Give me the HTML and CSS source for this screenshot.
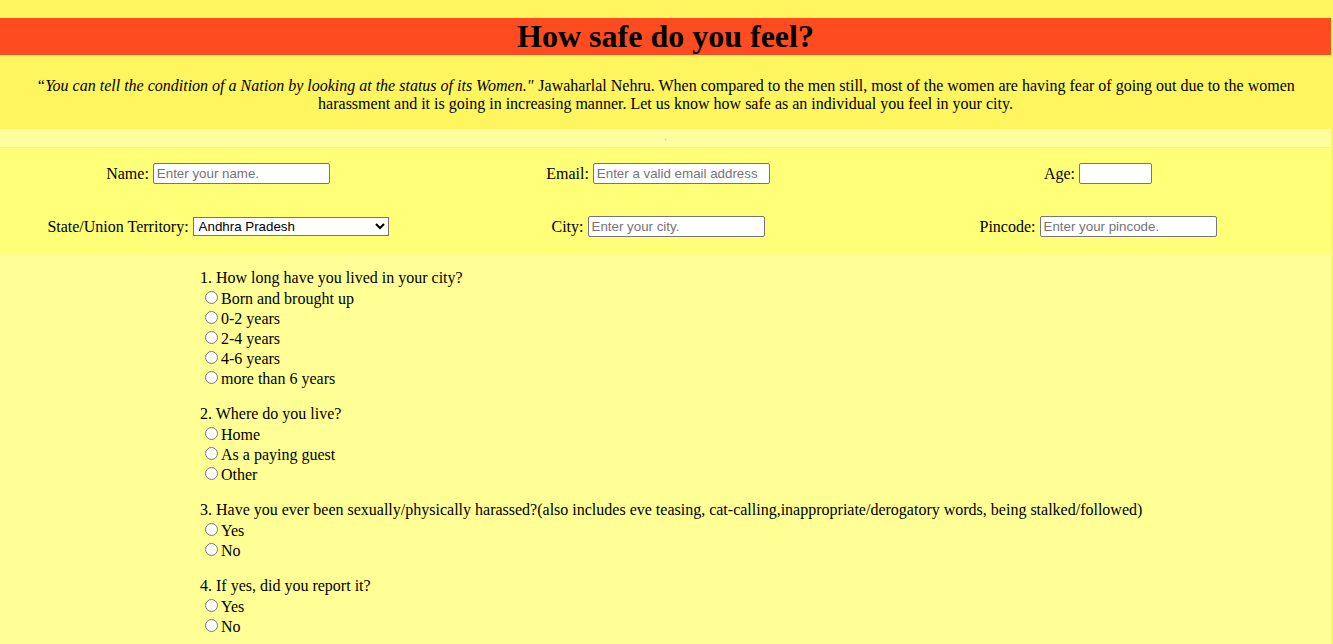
FILE: index.html
```html
<!DOCTYPE html>
<html lang="en">
<head>
<meta charset="utf-8">
<title>How safe do you feel?</title>
<link rel="stylesheet" href="styles.css">
</head>
<body>
<header class="banner">
  <h1 class="title">How safe do you feel?</h1>
</header>
<p class="intro"><em class="quote">“You can tell the condition of a Nation by looking at the status of its Women."</em> Jawaharlal Nehru. When compared to the men still, most of the women are having fear of going out due to the women harassment and it is going in increasing manner. Let us know how safe as an individual you feel in your city.</p>
<div class="divider"><span class="dot">.</span></div>
<form class="survey">
  <div class="details">
    <label class="field">Name: <input class="text-input" type="text" placeholder="Enter your name."></label>
    <label class="field">Email: <input class="text-input" type="email" placeholder="Enter a valid email address"></label>
    <label class="field">Age: <input class="text-input age-input" type="text"></label>
    <label class="field">State/Union Territory: <select class="state-select">
      <option>Andhra Pradesh</option>
      <option>Arunachal Pradesh</option>
      <option>Assam</option>
      <option>Bihar</option>
    </select></label>
    <label class="field">City: <input class="text-input" type="text" placeholder="Enter your city."></label>
    <label class="field">Pincode: <input class="text-input" type="text" placeholder="Enter your pincode."></label>
  </div>
  <div class="questions">
    <div class="question">
      <div class="q-text">1. How long have you lived in your city?</div>
      <label class="option"><input type="radio" name="q1">Born and brought up</label>
      <label class="option"><input type="radio" name="q1">0-2 years</label>
      <label class="option"><input type="radio" name="q1">2-4 years</label>
      <label class="option"><input type="radio" name="q1">4-6 years</label>
      <label class="option"><input type="radio" name="q1">more than 6 years</label>
    </div>
    <div class="question">
      <div class="q-text">2. Where do you live?</div>
      <label class="option"><input type="radio" name="q2">Home</label>
      <label class="option"><input type="radio" name="q2">As a paying guest</label>
      <label class="option"><input type="radio" name="q2">Other</label>
    </div>
    <div class="question">
      <div class="q-text">3. Have you ever been sexually/physically harassed?(also includes eve teasing, cat-calling,inappropriate/derogatory words, being stalked/followed)</div>
      <label class="option"><input type="radio" name="q3">Yes</label>
      <label class="option"><input type="radio" name="q3">No</label>
    </div>
    <div class="question">
      <div class="q-text">4. If yes, did you report it?</div>
      <label class="option"><input type="radio" name="q4">Yes</label>
      <label class="option"><input type="radio" name="q4">No</label>
    </div>
  </div>
</form>
</body>
</html>
```

FILE: styles.css
```css
html, body {
  margin: 0;
  padding: 0;
}
body {
  background: #fff55f;
  font-family: "Liberation Serif", "Times New Roman", serif;
  font-size: 16px;
  color: #000;
  padding-top: 18px;
  padding-right: 2px;
}
.banner {
  background: #ff4b20;
}
.title {
  margin: 0;
  height: 37px;
  line-height: 37px;
  font-size: 32px;
  font-weight: bold;
  text-align: center;
}
.intro {
  margin: 22px 0 16px;
  line-height: 18px;
  text-align: center;
}
.quote {
  padding-right: 1px;
}
.divider {
  background: #ffffa0;
  height: 18px;
  text-align: center;
  line-height: 12px;
}
.dot {
  font-size: 6px;
  color: #777;
}
.survey {
  margin: 0;
}
.details {
  background: #ffff78;
  display: grid;
  grid-template-columns: repeat(3, 436px);
  column-gap: 4px;
  row-gap: 32px;
  padding: 15px 0 16px;
  margin-top: 1px;
}
.field {
  display: flex;
  align-items: center;
  justify-content: center;
  height: 21px;
  white-space: pre;
}
.text-input {
  box-sizing: border-box;
  width: 177px;
  height: 21px;
  font-family: Arial, "Liberation Sans", sans-serif;
  font-size: 13.33px;
  padding: 1px 3px;
  border: 1px solid #767676;
  border-radius: 2px;
  background: #fff;
  margin: 0;
}
.text-input::placeholder {
  color: #757575;
}
.age-input {
  width: 73px;
}
.state-select {
  box-sizing: border-box;
  width: 196px;
  height: 19px;
  font-family: Arial, "Liberation Sans", sans-serif;
  font-size: 13.33px;
  border: 1px solid #767676;
  border-radius: 0;
  background: #fff;
  margin: 0;
  padding: 0 0 0 1px;
  color: #000;
}
.questions {
  background: #ffff96;
  padding: 15px 0 20px 200px;
}
.question {
  margin-bottom: 16px;
}
.q-text {
  height: 20px;
  line-height: 20px;
}
.option {
  display: block;
  height: 20px;
  line-height: 18px;
}
.option input {
  margin: 3px 3px 0 5px;
}
```
